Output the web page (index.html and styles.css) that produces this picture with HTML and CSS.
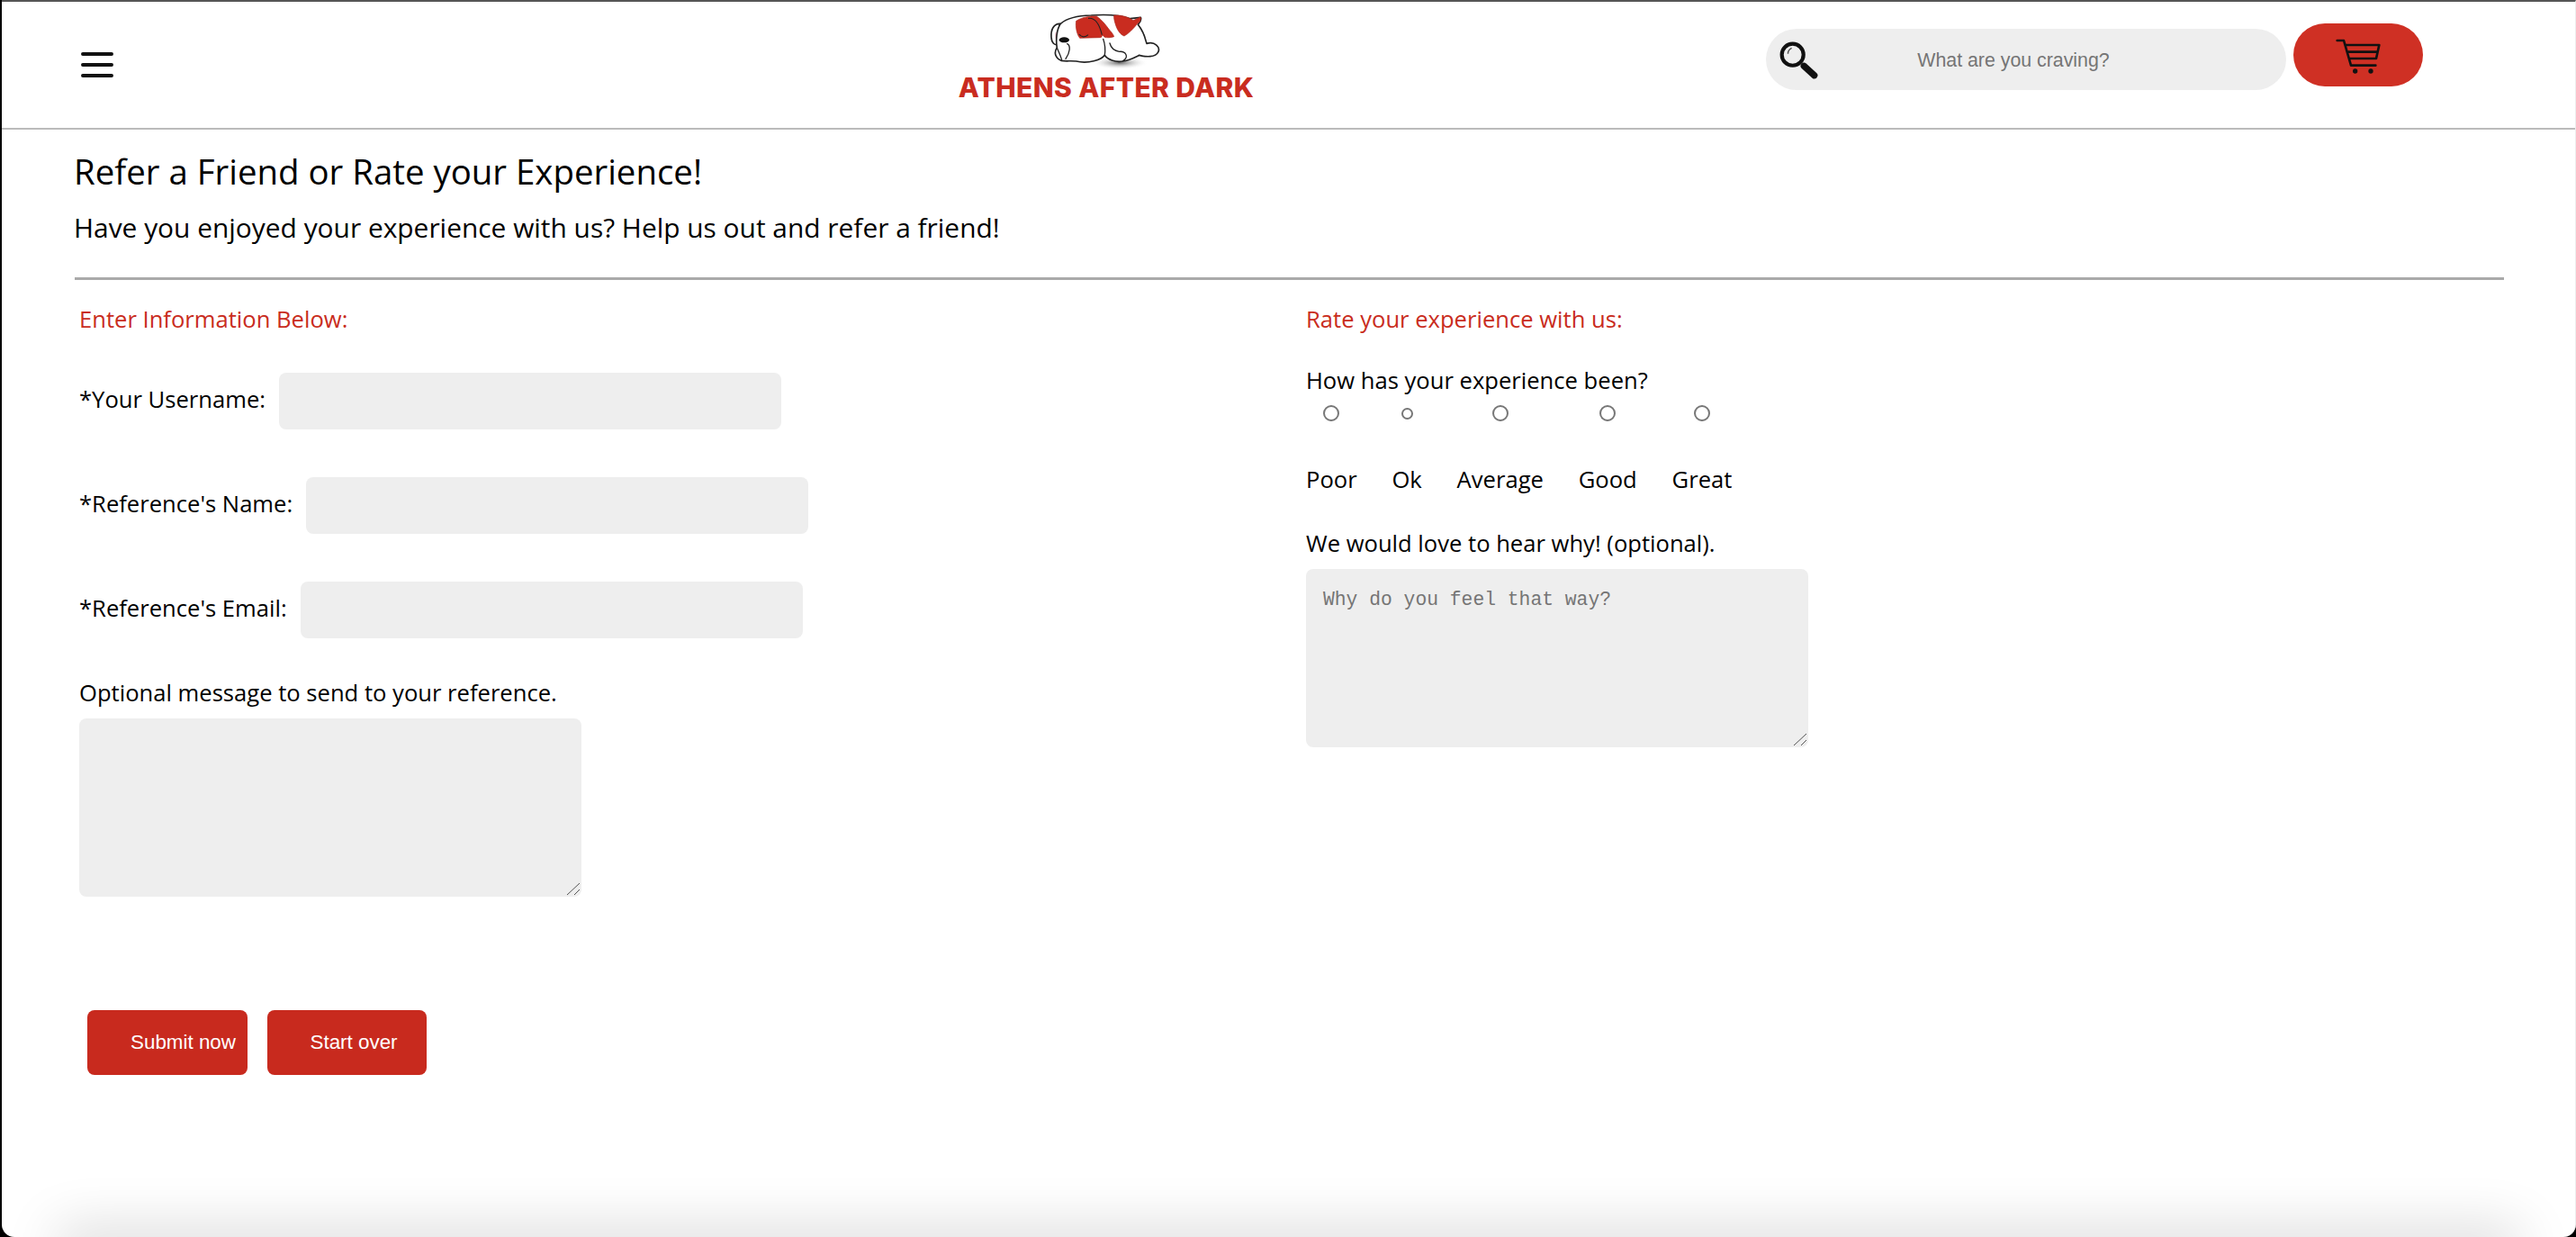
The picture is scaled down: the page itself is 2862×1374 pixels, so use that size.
FILE: index.html
```html
<!DOCTYPE html>
<html lang="en">
<head>
    <meta charset="UTF-8">
    <meta name="viewport" content="width=device-width, initial-scale=1.0">
    <title>Athens After Dark - Refer a Friend</title>
    <link rel="stylesheet" href="styles.css">
</head>
<body>
    <div class="window">
        <header class="site-header">
            <svg class="menu-icon" viewBox="0 0 36 30" width="36" height="30" aria-label="Menu">
                <path d="M2 3H34M2 15H34M2 27H34" stroke="#111" stroke-width="4" stroke-linecap="round" fill="none"/>
            </svg>

            <a class="logo" href="#">
                <svg class="logo-dog" viewBox="0 0 420 210" width="140" height="70">
                    <defs>
                        <radialGradient id="dog-shadow">
                            <stop offset="0" stop-color="#666"/>
                            <stop offset="1" stop-color="#fff" stop-opacity="0"/>
                        </radialGradient>
                    </defs>
                    <ellipse cx="255" cy="185" rx="95" ry="22" fill="url(#dog-shadow)"/>
                    <path d="M55 55C35 55 25 75 27 100C28 120 38 127 50 125Z" fill="#fff" stroke="#222" stroke-width="5"/>
                    <path d="M42 82C38 95 40 108 47 115L52 92Z" fill="#eeb4c0"/>
                    <path d="M58 55C80 36 120 28 160 27C200 24 250 24 290 38L325 34C328 42 322 52 316 58C332 78 340 100 345 121C372 113 392 133 383 150C375 168 342 166 320 160C300 170 285 178 265 180C240 184 215 175 205 160C195 175 150 190 110 180C90 178 75 181 60 178C40 170 35 150 46 135C42 110 44 75 58 55Z" fill="#fff" stroke="#222" stroke-width="5" stroke-linejoin="round"/>
                    <path d="M110 46C125 36 150 28 178 30C195 42 208 58 218 72C226 82 234 90 236 98C225 102 212 102 205 100L197 92C196 98 195 100 190 101L122 103C112 90 107 66 110 46Z" fill="#c92c20" stroke="#a82318" stroke-width="2"/>
                    <path d="M236 27C258 26 280 30 300 44L324 33C327 41 322 50 314 55C300 72 285 88 270 96C258 92 248 78 242 60C238 48 235 38 236 27Z" fill="#c92c20" stroke="#a82318" stroke-width="2"/>
                    <path d="M150 37C170 34 186 50 196 92M120 90C126 100 140 102 150 92" fill="none" stroke="#222" stroke-width="3.5"/>
                    <ellipse cx="70" cy="109" rx="17" ry="9" fill="#111"/>
                    <path d="M80 122C92 128 90 150 75 172M46 135C52 150 58 160 62 176M222 120C226 136 236 145 254 148C274 146 288 165 266 179M205 160C208 140 205 120 200 106" fill="none" stroke="#222" stroke-width="4" stroke-linecap="round"/>
                </svg>
                <span class="logo-text">ATHENS AFTER DARK</span>
            </a>

            <div class="search">
                <svg class="search-icon" viewBox="0 0 44 42" width="46" height="44">
                    <circle cx="15" cy="15" r="11.5" fill="none" stroke="#111" stroke-width="4"/>
                    <path d="M10 14C10 11 12 9 14 8" fill="none" stroke="#555" stroke-width="1.5"/>
                    <path d="M27 27L38 37" stroke="#111" stroke-width="7" stroke-linecap="round"/>
                </svg>
                <input class="search-input" type="text" placeholder="What are you craving?">
            </div>

            <button class="cart-btn" type="button" aria-label="Cart">
                <svg viewBox="-15 3 210 180" width="70" height="60">
                    <path d="M20 45H42L66 128H148M50 60H160L150 105H60M55 83H155" fill="none" stroke="#111" stroke-width="8" stroke-linecap="round" stroke-linejoin="round"/>
                    <circle cx="80" cy="147" r="8" fill="#111"/>
                    <circle cx="132" cy="147" r="8" fill="#111"/>
                </svg>
            </button>
        </header>

        <main class="content">
            <h1>Refer a Friend or Rate your Experience!</h1>
            <p class="lead">Have you enjoyed your experience with us? Help us out and refer a friend!</p>
            <hr class="divider">

            <form class="form-grid">
                <section class="form-col">
                    <h2 class="section-title">Enter Information Below:</h2>

                    <div class="field-row first-row">
                        <label for="username">*Your Username:</label>
                        <input class="text-field" id="username" type="text">
                    </div>
                    <div class="field-row">
                        <label for="refname">*Reference's Name:</label>
                        <input class="text-field" id="refname" type="text">
                    </div>
                    <div class="field-row">
                        <label for="refemail">*Reference's Email:</label>
                        <input class="text-field" id="refemail" type="text">
                    </div>

                    <label class="block-label message-label" for="message">Optional message to send to your reference.</label>
                    <div class="area-wrap">
                        <textarea class="text-area" id="message"></textarea>
                        <svg class="grip" viewBox="0 0 16 15" width="16" height="15">
                            <path d="M1 14L15 1M9 14L15 8" stroke="#555" stroke-width="1" fill="none"/>
                        </svg>
                    </div>

                    <div class="actions">
                        <button class="action-btn" type="button">Submit now</button>
                        <button class="action-btn" type="button">Start over</button>
                    </div>
                </section>

                <section class="form-col">
                    <h2 class="section-title">Rate your experience with us:</h2>

                    <p class="block-label how-label">How has your experience been?</p>
                    <div class="rating">
                        <input class="radio" type="radio" name="rate">
                        <input class="radio small" type="radio" name="rate">
                        <input class="radio" type="radio" name="rate">
                        <input class="radio" type="radio" name="rate">
                        <input class="radio" type="radio" name="rate">
                        <span>Poor</span>
                        <span>Ok</span>
                        <span>Average</span>
                        <span>Good</span>
                        <span>Great</span>
                    </div>

                    <label class="block-label why-label" for="why">We would love to hear why! (optional).</label>
                    <div class="area-wrap">
                        <textarea class="text-area" id="why" placeholder="Why do you feel that way?"></textarea>
                        <svg class="grip" viewBox="0 0 16 15" width="16" height="15">
                            <path d="M1 14L15 1M9 14L15 8" stroke="#555" stroke-width="1" fill="none"/>
                        </svg>
                    </div>
                </section>
            </form>
        </main>

        <div class="bottom-shadow"></div>
    </div>
</body>
</html>
```

FILE: styles.css
```css
html {
    background: #000;
}
body {
    margin: 0;
    padding-left: 2px;
    font-family: "Open Sans", Arial, sans-serif;
    color: #000;
}
.window {
    position: relative;
    height: 1374px;
    box-sizing: border-box;
    overflow: hidden;
    background: #fff;
    border-top: 2px solid #555;
    border-right: 1px solid #eee;
    border-radius: 0 0 14px 14px;
}

/* header */
.site-header {
    display: flex;
    align-items: flex-start;
    height: 140px;
    border-bottom: 2px solid #bbb;
}
.menu-icon {
    margin: 55px 0 0 88px;
}
.logo {
    display: flex;
    flex-direction: column;
    align-items: center;
    width: 330px;
    margin: 6px 0 0 938px;
    text-decoration: none;
}
.logo-dog {
    filter: blur(0.5px);
}
.logo-text {
    font-family: Inter, "Open Sans", sans-serif;
    font-size: 30px;
    font-weight: 800;
    letter-spacing: 0.4px;
    line-height: 36px;
    margin-top: 1px;
    white-space: nowrap;
    color: #c92c20;
}
.search {
    position: relative;
    margin: 30px 0 0 568px;
}
.search-icon {
    position: absolute;
    left: 14px;
    top: 13px;
}
.search-input {
    display: block;
    width: 578px;
    height: 68px;
    box-sizing: border-box;
    padding: 3px 58px 0 30px;
    border: 0;
    border-radius: 34px;
    background: #eee;
    font-family: "Liberation Sans", Arial, sans-serif;
    font-size: 21.33px;
    text-align: center;
}
.cart-btn {
    display: flex;
    align-items: center;
    justify-content: center;
    width: 144px;
    height: 70px;
    margin: 24px 0 0 8px;
    padding: 0;
    border: 0;
    border-radius: 35px;
    background: #cf3024;
}

/* page */
.content {
    padding: 0 79px 0 81px;
}
h1 {
    margin: 0 0 0 -1px;
    padding-top: 19px;
    font-size: 38.4px;
    font-weight: 400;
    line-height: 54px;
}
.lead {
    margin: 14px 0 0 -1px;
    font-size: 29.9px;
    line-height: 44px;
}
.divider {
    height: 3px;
    margin: 33px 0 0;
    border: 0;
    background: #aaa;
}

/* form */
.form-grid {
    display: grid;
    grid-template-columns: 1363px 1fr;
    padding: 26px 0 0 5px;
    font-size: 25.6px;
    line-height: 36px;
}
.section-title {
    margin: 0;
    font-size: 25.6px;
    font-weight: 400;
    color: #c92c20;
}
.field-row {
    display: flex;
    align-items: center;
    gap: 15px;
    margin-top: 53px;
}
.field-row label {
    padding-bottom: 3px;
}
.first-row {
    margin-top: 41px;
}
.text-field {
    width: 558px;
    height: 63px;
    box-sizing: border-box;
    border: 0;
    border-radius: 8px;
    background: #eee;
}
.block-label {
    display: block;
    margin: 0;
}
.message-label {
    margin-top: 43px;
}
.area-wrap {
    position: relative;
    width: 558px;
    margin-top: 10px;
}
.text-area {
    display: block;
    width: 558px;
    height: 198px;
    box-sizing: border-box;
    padding: 22px 19px;
    border: 0;
    border-radius: 8px;
    background: #eee;
    font-family: "Liberation Mono", "Courier New", monospace;
    font-size: 21.33px;
    resize: none;
}
.grip {
    position: absolute;
    right: 1px;
    bottom: 1px;
    pointer-events: none;
}
.actions {
    display: flex;
    gap: 22px;
    margin: 126px 0 0 9px;
}
.action-btn {
    width: 177.5px;
    height: 72px;
    padding: 0 0 0 48px;
    border: 0;
    border-radius: 8px;
    background: #c82a1e;
    color: #fff;
    font-family: "Liberation Sans", Arial, sans-serif;
    font-size: 22.4px;
    text-align: left;
    white-space: nowrap;
}
.how-label {
    margin-top: 32px;
}
.rating {
    display: inline-grid;
    grid-template-columns: repeat(5, auto);
    justify-items: center;
    align-items: center;
    column-gap: 38.8px;
    row-gap: 47px;
    margin-top: 9px;
}
.radio {
    appearance: none;
    width: 18px;
    height: 18px;
    box-sizing: border-box;
    margin: 0;
    border: 2px solid #777;
    border-radius: 50%;
    background: #fff;
}
.radio.small {
    width: 13px;
    height: 13px;
}
.why-label {
    margin-top: 35px;
}

.bottom-shadow {
    position: absolute;
    left: 70px;
    right: 70px;
    bottom: -20px;
    height: 20px;
    box-shadow: 0 0 60px 8px rgba(0, 0, 0, 0.18);
}
```
